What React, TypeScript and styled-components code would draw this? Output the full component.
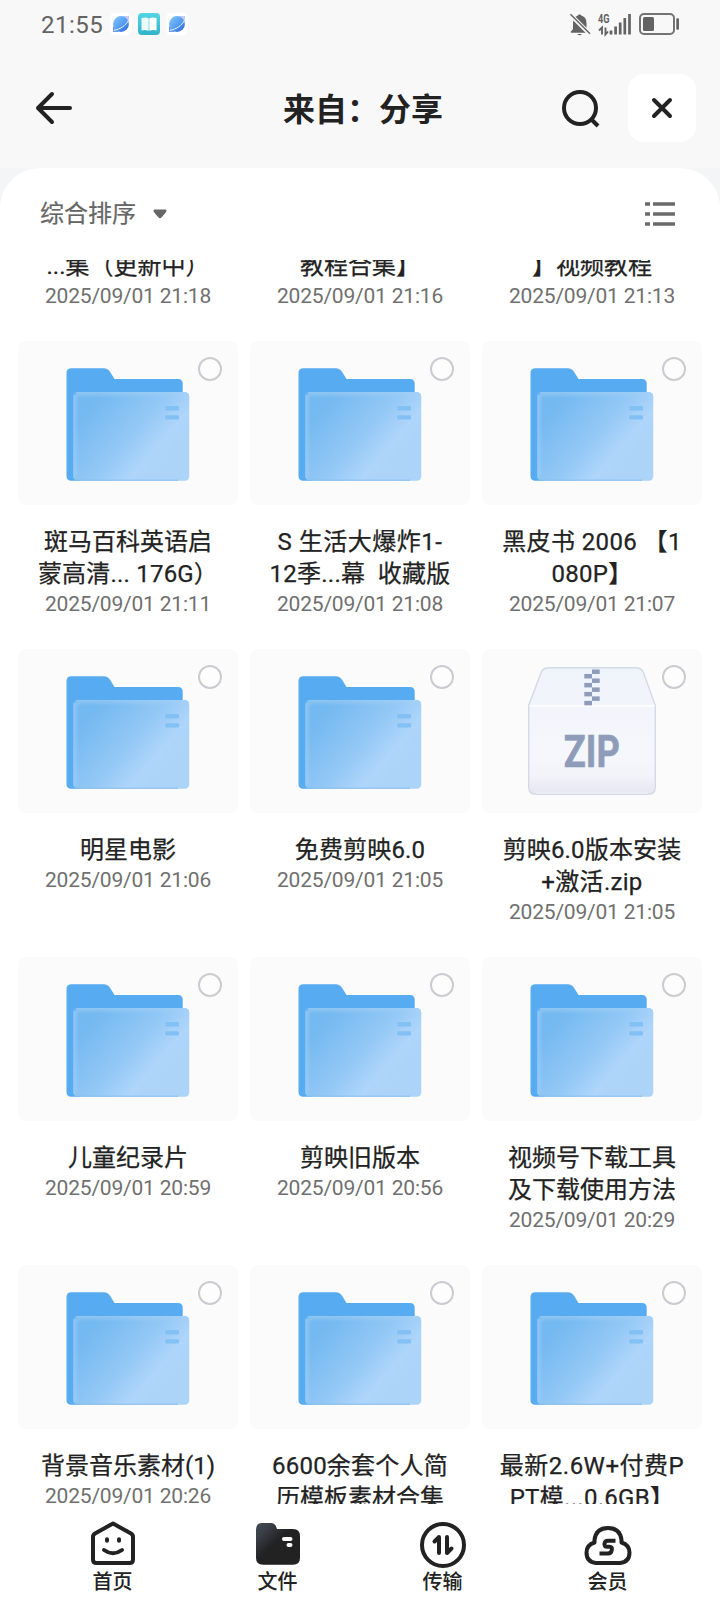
import React from 'react';
import styled, { createGlobalStyle } from 'styled-components';

const GlobalStyle = createGlobalStyle`
  * { box-sizing: border-box; }
  body { margin: 0; background: #fff; font-family: "Noto Sans CJK SC", sans-serif; color: #222; }
  svg { display: block; flex: none; }
`;

const Screen = styled.div`
  width: 720px;
  height: 1612px;
  display: flex;
  flex-direction: column;
  overflow: hidden;
  background: #f8f8f8;
`;

const StatusBar = styled.div`
  height: 48px;
  flex: none;
  display: flex;
  align-items: center;
  justify-content: space-between;
  padding: 0 40px 0 41px;
  color: #636363;
`;

const StatusGroup = styled.div<{ $gap: number }>`
  display: flex;
  align-items: center;
  gap: ${(p) => p.$gap}px;
`;

const Clock = styled.span`
  width: 63px;
  padding-top: 2px;
  font-family: Roboto, "Noto Sans CJK SC", sans-serif;
  font-size: 24px;
  line-height: 46px;
  letter-spacing: 0.5px;
  white-space: nowrap;
`;

const Header = styled.header`
  height: 120px;
  flex: none;
  display: grid;
  grid-template-columns: 200px 1fr 200px;
  align-items: center;
  padding: 0 24px 0 30px;
`;

const Title = styled.h1`
  margin: 0;
  padding-bottom: 2px;
  font-size: 32px;
  line-height: 40px;
  font-weight: 700;
  text-align: center;
  white-space: nowrap;
`;

const HeaderActions = styled.div`
  display: flex;
  align-items: center;
  justify-content: flex-end;
  gap: 28px;
`;

const CloseButton = styled.button`
  width: 68px;
  height: 68px;
  border: 0;
  padding: 0;
  border-radius: 16px;
  background: #fff;
  display: grid;
  place-items: center;
`;

const PlainButton = styled.button`
  border: 0;
  padding: 0;
  background: none;
  justify-self: start;
`;

const PanelBackdrop = styled.div`
  flex: 1;
  min-height: 0;
  display: flex;
  background: #f3f5f7;
`;

const Panel = styled.main`
  flex: 1;
  min-width: 0;
  display: flex;
  flex-direction: column;
  background: #fff;
  border-radius: 40px 40px 0 0;
`;

const SortBar = styled.div`
  height: 92px;
  flex: none;
  display: flex;
  align-items: center;
  justify-content: space-between;
  padding: 0 45px 0 40px;
`;

const SortLabel = styled.button`
  display: flex;
  align-items: center;
  gap: 17px;
  border: 0;
  padding: 0;
  background: none;
  color: #666;
  font: 400 24px/36px "Noto Sans CJK SC", sans-serif;
  -webkit-text-stroke: 0.2px currentColor;
`;

const SortText = styled.span`
  padding-bottom: 4px;
`;

const ListViewport = styled.div`
  flex: 1;
  min-height: 0;
  overflow: hidden;
  display: flex;
  flex-direction: column;
`;

const Grid = styled.div`
  flex: none;
  margin-top: -227px;
  display: grid;
  grid-template-columns: repeat(3, 220px);
  grid-auto-rows: 308px;
  column-gap: 12px;
  padding: 0 18px;
`;

const Item = styled.article`
  display: flex;
  flex-direction: column;
  align-items: center;
`;

const Thumb = styled.div`
  width: 220px;
  height: 164px;
  flex: none;
  margin-bottom: 21px;
  border-radius: 8px;
  background: #fbfbfc;
`;

const NameLine = styled.div<{ $spacing: number }>`
  height: 32px;
  flex: none;
  font-family: Roboto, "Noto Sans CJK SC", sans-serif;
  font-size: 24px;
  line-height: 32px;
  letter-spacing: ${(p) => p.$spacing}px;
  white-space: pre;
  font-weight: 400;
  -webkit-text-stroke: 0.25px currentColor;
`;

const DateLine = styled.time`
  margin-top: 1px;
  font-family: Roboto, sans-serif;
  font-size: 21px;
  line-height: 27px;
  letter-spacing: -0.2px;
  color: #707070;
  font-weight: 400;
  white-space: nowrap;
`;

const TabBar = styled.nav`
  height: 108px;
  flex: none;
  display: grid;
  grid-template-columns: repeat(4, 165px);
  padding: 14px 30px 0;
  background: #fff;
`;

const Tab = styled.div`
  display: flex;
  flex-direction: column;
  align-items: center;
`;

const TabLabel = styled.span`
  font-size: 20px;
  line-height: 26px;
  font-weight: 500;
`;

const PlanetIcon = () => (
  <svg width="22" height="22" viewBox="0 0 22 22">
    <defs>
      <linearGradient id="planet" x1="0" y1="0" x2="1" y2="1">
        <stop offset="0" stopColor="#86c8fc" />
        <stop offset="0.55" stopColor="#559cf2" />
        <stop offset="1" stopColor="#2a5fd0" />
      </linearGradient>
    </defs>
    <rect width="22" height="22" rx="5" fill="#fff" />
    <path d="M13 3h6v6z" fill="#c9cdf3" />
    <path d="M3 13v6h6z" fill="#6e9df0" />
    <circle cx="11" cy="11" r="7.900" fill="url(#planet)" />
    <path d="M4 17.200C10 16.500 16 12.500 18.600 7" fill="none" stroke="#e8f2ff" strokeWidth="1" />
  </svg>
);

const BookIcon = () => (
  <svg width="22" height="22" viewBox="0 0 22 22">
    <defs>
      <linearGradient id="book" x1="0" y1="0" x2="0" y2="1">
        <stop offset="0" stopColor="#52d6e6" />
        <stop offset="1" stopColor="#30b3c8" />
      </linearGradient>
    </defs>
    <rect width="22" height="22" rx="4" fill="url(#book)" />
    <path d="M3.500 5q4-1.300 7.200 0.200V17.800q-3.500-1.400-7.200-0.200z" fill="#eefbfd" />
    <path d="M18.500 5q-4-1.300-7.200 0.200V17.800q3.500-1.400 7.200-0.200z" fill="#fff" />
  </svg>
);

const MutedBellIcon = () => (
  <svg width="21" height="23" viewBox="0 0 21 23">
    <path d="M0.800 19.800v-1.300l2.200-2.300V10Q3 4.200 7.500 2.800 9.600-0.200 11.700 2.800 16.500 4.200 16.500 10v6.200l2.200 2.300v1.300z" fill="#636363" />
    <path d="M7.200 21h4.800q-2.400 2.600-4.800 0z" fill="#636363" />
    <path d="M1 2.200L19.500 20.700" stroke="#f8f8f8" strokeWidth="4.200" />
    <path d="M0.500 1.300L20 20.800" stroke="#636363" strokeWidth="1.500" />
  </svg>
);

const SignalText = styled.text`
  font: 700 13px "Roboto", sans-serif;
  fill: #636363;
`;

const SignalIcon = () => (
  <svg width="34" height="23" viewBox="0 0 34 23" overflow="visible">
    <SignalText x="0" y="10" textLength="11.500" lengthAdjust="spacingAndGlyphs">4G</SignalText>
    <path d="M4 21.500v-7l-3 3M7.500 14.500v7l2.500-3" fill="none" stroke="#636363" strokeWidth="1.900" />
    <path d="M13 21.500v-4M17.600 21.500v-8M22.200 21.500V9.500M26.800 21.500V5M31.500 21.500V1" stroke="#636363" strokeWidth="2.700" />
  </svg>
);

const BatteryIcon = () => (
  <svg width="41" height="22" viewBox="0 0 41 22">
    <rect x="1" y="1" width="34" height="20" rx="4" fill="none" stroke="#737373" strokeWidth="2" />
    <rect x="4" y="4" width="11" height="14" rx="1.500" fill="#636363" />
    <rect x="37.300" y="5.200" width="2.700" height="11.500" rx="1" fill="#636363" />
  </svg>
);

const BackIcon = () => (
  <svg width="48" height="40" viewBox="0 0 48 40" fill="none" stroke="#222" strokeWidth="4" strokeLinecap="round" strokeLinejoin="round">
    <path d="M40 20H8M22 6L8 20L22 34" />
  </svg>
);

const SearchIcon = () => (
  <svg width="40" height="40" viewBox="0 0 40 40" fill="none" stroke="#222" strokeWidth="4">
    <circle cx="20" cy="20" r="16" />
    <path d="M31 31L38 38" />
  </svg>
);

const CloseIcon = () => (
  <svg width="24" height="24" viewBox="0 0 24 24" fill="none" stroke="#222" strokeWidth="4" strokeLinecap="round">
    <path d="M4 4L20 20M20 4L4 20" />
  </svg>
);

const CaretIcon = () => (
  <svg width="14" height="10" viewBox="0 0 14 10">
    <path d="M1.500 0.500h11q1.300 0 1 1.500q-.2 1-5 6.500q-1.500 1.500-3 0Q1 3.500.5 2q-.3-1.500 1-1.500z" fill="#666" />
  </svg>
);

const ListIcon = () => (
  <svg width="30" height="24" viewBox="0 0 30 24" stroke="#6a6a6a" strokeWidth="3.700">
    <path d="M0 2h5M8 2h22M0 12h5M8 12h22M0 22h5M8 22h22" />
  </svg>
);

const FolderArt = () => (
  <svg width="220" height="164" viewBox="0 0 220 164">
    <defs>
      <linearGradient id="folderFront" gradientUnits="userSpaceOnUse" x1="75" y1="62" x2="143" y2="121">
        <stop offset="0" stopColor="#74b9f0" />
        <stop offset="0.550" stopColor="#93c8f6" />
        <stop offset="0.850" stopColor="#aed5fa" />
        <stop offset="1" stopColor="#acd4f9" />
      </linearGradient>
      <linearGradient id="folderEdge" x1="0" y1="0" x2="1" y2="0">
        <stop offset="0" stopColor="#a4d0f5" stopOpacity="0.600" />
        <stop offset="1" stopColor="#a4d0f5" stopOpacity="0" />
      </linearGradient>
      <linearGradient id="folderTop" x1="0" y1="0" x2="0" y2="1">
        <stop offset="0" stopColor="#a4d0f5" stopOpacity="0.600" />
        <stop offset="1" stopColor="#a4d0f5" stopOpacity="0" />
      </linearGradient>
    </defs>
    <path d="M48.500 32q0-4.800 4.800-4.800H86q3.800 0 6 3.500l4.500 7.300H160q4.700 0 4.700 4.700V100L60 139.700h-6.700q-4.800 0-4.800-4.700z" fill="#57abf1" />
    <rect x="55.300" y="51" width="116" height="88.700" rx="4.500" fill="url(#folderFront)" />
    <rect x="55.300" y="54" width="6" height="83" fill="url(#folderEdge)" />
    <rect x="58" y="51" width="110" height="6" fill="url(#folderTop)" />
    <path d="M58 139.200H160" stroke="#86bdea" strokeWidth="1" />
    <rect x="147.300" y="65" width="13.700" height="4.400" rx="1" fill="#83c0f3" />
    <rect x="147.300" y="74.200" width="13.700" height="4.400" rx="1" fill="#83c0f3" />
    <circle cx="192" cy="28" r="11" fill="#fdfdfd" stroke="#cbccd1" strokeWidth="2" />
  </svg>
);

const ZipText = styled.text`
  font: 700 44px "Roboto", sans-serif;
  fill: #8e9cba;
  stroke: #8e9cba;
  stroke-width: 0.6px;
`;

const zipTeeth = [0, 1, 2, 3, 4, 5, 6, 7];

const ZipArt = () => (
  <svg width="220" height="164" viewBox="0 0 220 164">
    <defs>
      <linearGradient id="zipBody" x1="0" y1="0" x2="0" y2="1">
        <stop offset="0" stopColor="#eff3fa" />
        <stop offset="0.700" stopColor="#f5f7fc" />
        <stop offset="0.850" stopColor="#f3f3fa" />
        <stop offset="1" stopColor="#e6e5f1" />
      </linearGradient>
    </defs>
    <path d="M67 18.800H153.500q6 0 8 5L173.300 56.500V138q0 7.300-7.300 7.300H54q-7.300 0-7.300-7.300V56.500L59 23.800q2-5 8-5z" fill="url(#zipBody)" stroke="#d3d9e5" strokeWidth="1.400" />
    <path d="M47.500 57H172.500" stroke="#fff" strokeWidth="1.500" />
    <path d="M54 144H166" stroke="#f4f5fb" strokeWidth="1" />
    {zipTeeth.map((i) => (
      <rect key={i} x={i % 2 ? 102.3 : 110} y={20.5 + i * 4.48} width="7.700" height="4.480" fill="#8e9cba" />
    ))}
    <ZipText x="81.800" y="118.300" textLength="56" lengthAdjust="spacingAndGlyphs">ZIP</ZipText>
    <circle cx="192" cy="28" r="11" fill="#fdfdfd" stroke="#cbccd1" strokeWidth="2" />
  </svg>
);

const HomeIcon = () => (
  <svg width="50" height="50" viewBox="0 0 50 50" fill="none" stroke="#222" strokeWidth="4" strokeLinecap="round" strokeLinejoin="round">
    <path d="M25 5.500L43 15.500Q45 16.700 45 19V41.500Q45 45 41.500 45H8.500Q5 45 5 41.500V19Q5 16.700 7 15.500z" />
    <path d="M19 21.200v1.600M31 21.200v1.600" />
    <path d="M16 32q9 6.500 18 0" />
  </svg>
);

const FilesIcon = () => (
  <svg width="50" height="50" viewBox="0 0 50 50">
    <defs>
      <linearGradient id="filesFill" x1="0" y1="0" x2="0.700" y2="0.700">
        <stop offset="0" stopColor="#434954" />
        <stop offset="0.250" stopColor="#3b4049" />
        <stop offset="0.650" stopColor="#222" />
      </linearGradient>
    </defs>
    <path d="M3 11.500q0-6.500 6-6.500h9.500q4 0 5.500 6H40q7 0 7 7V39.800q0 7-7 7H10q-7 0-7-7z" fill="url(#filesFill)" />
    <path d="M31 21h6.500M35.500 27h2" stroke="#fff" strokeWidth="4" strokeLinecap="round" />
  </svg>
);

const TransferIcon = () => (
  <svg width="50" height="50" viewBox="0 0 50 50" fill="none" stroke="#222" strokeLinecap="round" strokeLinejoin="round">
    <circle cx="25" cy="27" r="21" strokeWidth="4" />
    <path d="M21 35V19L16.500 23.500M29 19V35L33.500 30.500" strokeWidth="4" />
  </svg>
);

const MemberIcon = () => (
  <svg width="50" height="50" viewBox="0 0 50 50" fill="none" stroke="#222" strokeLinecap="butt" strokeLinejoin="round">
    <path d="M13 45Q3.500 44 3.500 34.500Q3.500 27 11.500 24.500V22Q13 10 25 10Q37 10 38.500 22V24.500Q46.500 27 46.500 34.500Q46.500 44 37 45z" strokeWidth="4" />
    <path d="M32.500 22.800H25Q22 22.800 21.500 25.600Q21 28.800 24 28.800H26.500Q29.500 28.800 28.800 31.800Q28.200 35.400 25 35.400H16.500" strokeWidth="4" />
  </svg>
);

type FileEntry = {
  lines: string[];
  date?: string;
  spacing?: number[];
  zip?: boolean;
};

const files: FileEntry[] = [
  { lines: ['', '...集（更新中）'], date: '2025/09/01 21:18' },
  { lines: ['', '教程合集】'], date: '2025/09/01 21:16' },
  { lines: ['', '】视频教程'], date: '2025/09/01 21:13' },
  { lines: ['斑马百科英语启', '蒙高清... 176G）'], date: '2025/09/01 21:11', spacing: [0, 0.2] },
  { lines: ['S 生活大爆炸1-', '12季...幕  收藏版'], date: '2025/09/01 21:08', spacing: [0.5, 0.25] },
  { lines: ['黑皮书 2006 【1', '080P】'], date: '2025/09/01 21:07', spacing: [0.4, 0.3] },
  { lines: ['明星电影'], date: '2025/09/01 21:06' },
  { lines: ['免费剪映6.0'], date: '2025/09/01 21:05', spacing: [0.15] },
  { lines: ['剪映6.0版本安装', '+激活.zip'], date: '2025/09/01 21:05', spacing: [0.15, 0.3], zip: true },
  { lines: ['儿童纪录片'], date: '2025/09/01 20:59' },
  { lines: ['剪映旧版本'], date: '2025/09/01 20:56' },
  { lines: ['视频号下载工具', '及下载使用方法'], date: '2025/09/01 20:29' },
  { lines: ['背景音乐素材(1)'], date: '2025/09/01 20:26' },
  { lines: ['6600余套个人简', '历模板素材合集'], spacing: [0.2, 0] },
  { lines: ['最新2.6W+付费P', 'PT模...0.6GB】'], spacing: [0.5, 0.3] },
];

const tabs = [
  { label: '首页', Icon: HomeIcon },
  { label: '文件', Icon: FilesIcon },
  { label: '传输', Icon: TransferIcon },
  { label: '会员', Icon: MemberIcon },
];

export default function App() {
  return (
    <>
      <GlobalStyle />
      <Screen>
        <StatusBar>
          <StatusGroup $gap={6}>
            <Clock>21:55</Clock>
            <PlanetIcon />
            <BookIcon />
            <PlanetIcon />
          </StatusGroup>
          <StatusGroup $gap={7}>
            <MutedBellIcon />
            <SignalIcon />
            <BatteryIcon />
          </StatusGroup>
        </StatusBar>
        <Header>
          <PlainButton aria-label="返回"><BackIcon /></PlainButton>
          <Title>来自：分享</Title>
          <HeaderActions>
            <PlainButton aria-label="搜索"><SearchIcon /></PlainButton>
            <CloseButton aria-label="关闭"><CloseIcon /></CloseButton>
          </HeaderActions>
        </Header>
        <PanelBackdrop>
          <Panel>
            <SortBar>
              <SortLabel><SortText>综合排序</SortText><CaretIcon /></SortLabel>
              <ListIcon />
            </SortBar>
            <ListViewport>
              <Grid>
                {files.map((file, index) => (
                  <Item key={index}>
                    <Thumb>{file.zip ? <ZipArt /> : <FolderArt />}</Thumb>
                    {file.lines.map((line, i) => (
                      <NameLine key={i} $spacing={file.spacing?.[i] ?? 0}>{line}</NameLine>
                    ))}
                    {file.date && <DateLine>{file.date}</DateLine>}
                  </Item>
                ))}
              </Grid>
            </ListViewport>
          </Panel>
        </PanelBackdrop>
        <TabBar>
          {tabs.map(({ label, Icon }) => (
            <Tab key={label}>
              <Icon />
              <TabLabel>{label}</TabLabel>
            </Tab>
          ))}
        </TabBar>
      </Screen>
    </>
  );
}
